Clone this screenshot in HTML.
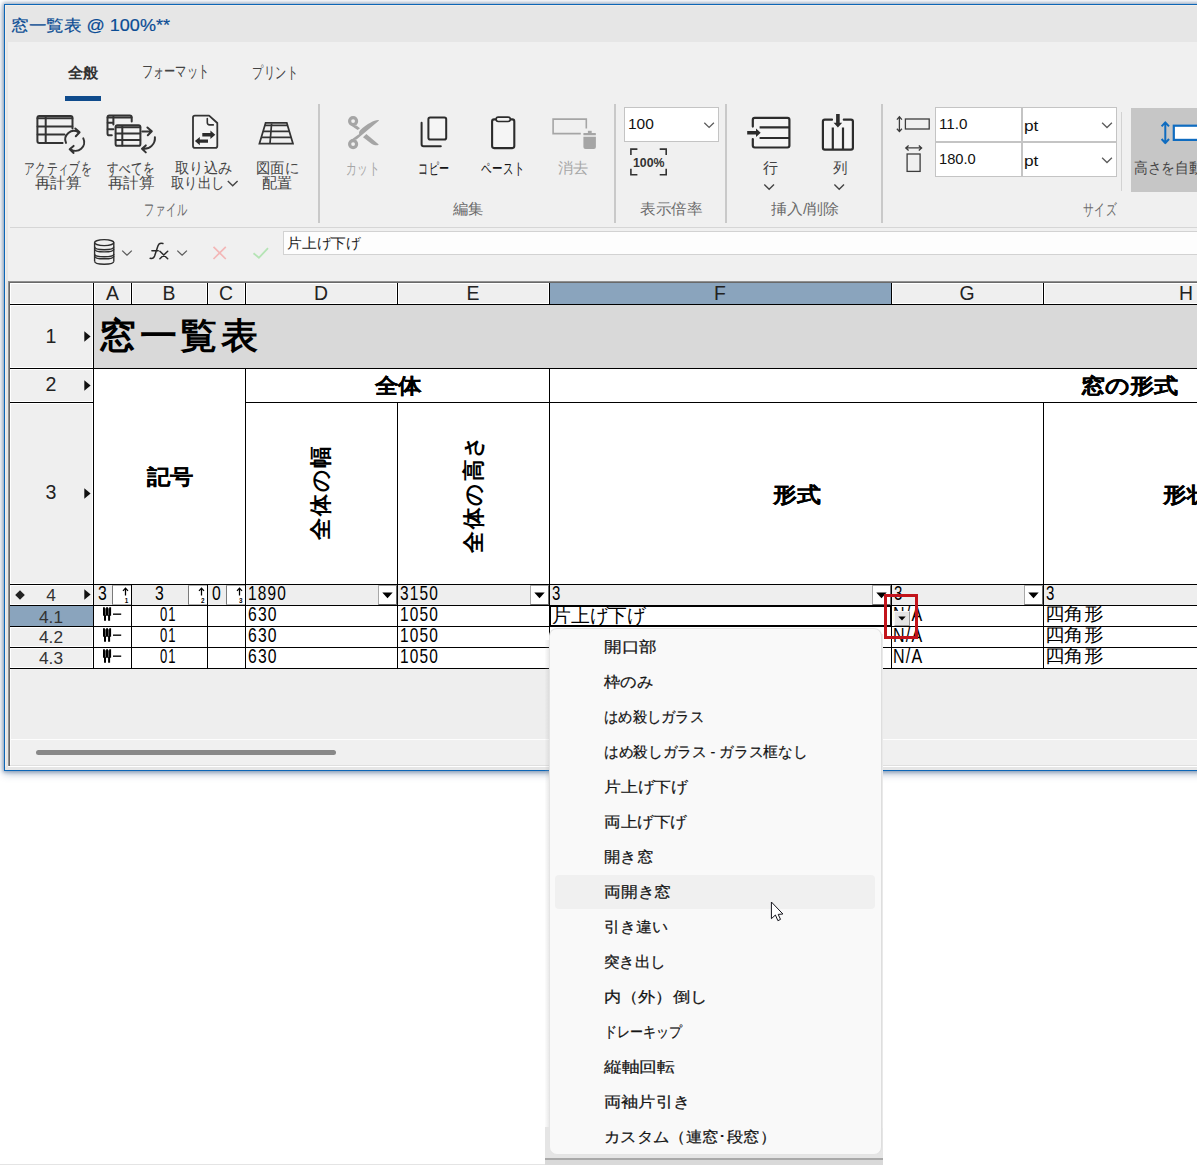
<!DOCTYPE html>
<html lang="ja"><head><meta charset="utf-8"><title>窓一覧表</title>
<style>
html,body{margin:0;padding:0}
body{width:1197px;height:1165px;overflow:hidden;background:#fff;position:relative;font-family:"Liberation Sans",sans-serif}
#root{position:absolute;left:0;top:0;width:1197px;height:1165px;overflow:hidden}
#root div,#root span.t,#root svg{position:absolute}
span.t{white-space:nowrap;transform-origin:0 50%}
svg{overflow:visible}
</style></head><body><div id="root">
<div style="left:4px;top:4px;width:1300px;height:767px;background:#e6e6e6;box-shadow:0 0 4px 1px rgba(55,90,135,.55),0 3px 8px rgba(55,90,135,.32)"></div>
<div style="left:8px;top:42px;width:1300px;height:725px;background:#f0f0f0;"></div>
<div style="left:4px;top:4px;width:1300px;height:1px;background:#0c66b7;"></div>
<div style="left:4px;top:4px;width:1px;height:767px;background:#0c66b7;"></div>
<div style="left:4px;top:770px;width:1300px;height:1px;background:#0c66b7;"></div>
<div style="left:5px;top:5px;width:1px;height:765px;background:#f3eee9;"></div>
<div style="left:5px;top:5px;width:1295px;height:1px;background:#f3eee9;"></div>
<span class="t" style="left:10.7px;top:16.80px;font-size:16.4px;line-height:16.4px;color:#0a4c94;transform:scale(1.1007,1);-webkit-text-stroke:.2px #0a4c94;">窓一覧表 @ 100%**</span>
<span class="t" style="left:67.8px;top:66.30px;font-size:14.6px;line-height:14.6px;color:#333;font-weight:bold;transform:scale(1.0200,1);">全般</span>
<span class="t" style="left:141.5px;top:64.00px;font-size:16px;line-height:16px;color:#444;transform:scale(0.6979,1.06);">フォーマット</span>
<span class="t" style="left:251.5px;top:64.85px;font-size:15.5px;line-height:15.5px;color:#444;transform:scale(0.7266,1.04);">プリント</span>
<div style="left:65px;top:96px;width:36px;height:5px;background:#0f4b8c;"></div>
<div style="left:318px;top:104px;width:2px;height:119px;background:#c9c9c9;"></div>
<div style="left:614px;top:104px;width:2px;height:119px;background:#c9c9c9;"></div>
<div style="left:725px;top:104px;width:2px;height:119px;background:#c9c9c9;"></div>
<div style="left:881px;top:104px;width:2px;height:119px;background:#c9c9c9;"></div>
<div style="left:1121px;top:112px;width:1px;height:79px;background:#d2d2d2;"></div>
<div style="left:10px;top:227px;width:1187px;height:1px;background:#d6d6d6;"></div>
<span class="t" style="left:24px;top:160.75px;font-size:14.5px;line-height:14.5px;color:#444;transform:scale(0.7556,1.13);">アクティブを</span>
<span class="t" style="left:35px;top:175.75px;font-size:14.5px;line-height:14.5px;color:#444;transform:scale(1.0333,1);">再計算</span>
<span class="t" style="left:107px;top:160.75px;font-size:14.5px;line-height:14.5px;color:#444;transform:scale(0.8083,1.13);">すべてを</span>
<span class="t" style="left:107.5px;top:175.75px;font-size:14.5px;line-height:14.5px;color:#444;transform:scale(1.0333,1);">再計算</span>
<span class="t" style="left:175px;top:160.75px;font-size:14.5px;line-height:14.5px;color:#444;transform:scale(0.9500,1);">取り込み</span>
<span class="t" style="left:171px;top:175.75px;font-size:14.5px;line-height:14.5px;color:#444;transform:scale(0.8917,1);">取り出し</span>
<span class="t" style="left:255.5px;top:160.75px;font-size:14.5px;line-height:14.5px;color:#444;transform:scale(0.9556,1);">図面に</span>
<span class="t" style="left:262px;top:175.75px;font-size:14.5px;line-height:14.5px;color:#444;">配置</span>
<span class="t" style="left:144px;top:201.75px;font-size:14.5px;line-height:14.5px;color:#6a6a6a;transform:scale(0.7250,1.13);">ファイル</span>
<span class="t" style="left:346px;top:160.75px;font-size:14.5px;line-height:14.5px;color:#a6a6a6;transform:scale(0.7556,1.13);">カット</span>
<span class="t" style="left:417.5px;top:160.75px;font-size:14.5px;line-height:14.5px;color:#151515;transform:scale(0.7111,1.13);">コピー</span>
<span class="t" style="left:481px;top:160.75px;font-size:14.5px;line-height:14.5px;color:#151515;transform:scale(0.7417,1.13);">ペースト</span>
<span class="t" style="left:558px;top:160.75px;font-size:14.5px;line-height:14.5px;color:#a6a6a6;transform:scale(1.0167,1);">消去</span>
<span class="t" style="left:452.5px;top:201.75px;font-size:14.5px;line-height:14.5px;color:#6a6a6a;transform:scale(1.0167,1);">編集</span>
<span class="t" style="left:639.5px;top:201.75px;font-size:14.5px;line-height:14.5px;color:#6a6a6a;transform:scale(1.0417,1);">表示倍率</span>
<span class="t" style="left:762.5px;top:160.75px;font-size:14.5px;line-height:14.5px;color:#444;">行</span>
<span class="t" style="left:832.5px;top:160.75px;font-size:14.5px;line-height:14.5px;color:#444;transform:scale(0.9667,1);">列</span>
<span class="t" style="left:771px;top:201.75px;font-size:14.5px;line-height:14.5px;color:#6a6a6a;transform:scale(1.0625,1);">挿入/削除</span>
<span class="t" style="left:1082.5px;top:201.75px;font-size:14.5px;line-height:14.5px;color:#6a6a6a;transform:scale(0.7556,1.13);">サイズ</span>
<div style="left:624px;top:107px;width:95px;height:35px;background:#fff;box-sizing:border-box;border:1px solid #c4c4c4"></div>
<span class="t" style="left:628px;top:116.25px;font-size:15.5px;line-height:15.5px;color:#111;">100</span>
<div style="left:935px;top:107px;width:87px;height:35px;background:#fff;box-sizing:border-box;border:1px solid #c4c4c4"></div>
<div style="left:1022px;top:107px;width:95px;height:35px;background:#fff;box-sizing:border-box;border:1px solid #c4c4c4"></div>
<div style="left:935px;top:142px;width:87px;height:35px;background:#fff;box-sizing:border-box;border:1px solid #c4c4c4"></div>
<div style="left:1022px;top:142px;width:95px;height:35px;background:#fff;box-sizing:border-box;border:1px solid #c4c4c4"></div>
<span class="t" style="left:939px;top:116.25px;font-size:15.5px;line-height:15.5px;color:#111;transform:scale(0.9828,1);">11.0</span>
<span class="t" style="left:939px;top:151.25px;font-size:15.5px;line-height:15.5px;color:#111;transform:scale(0.9487,1);">180.0</span>
<span class="t" style="left:1024px;top:118.25px;font-size:15.5px;line-height:15.5px;color:#111;transform:scale(1.1154,1);">pt</span>
<span class="t" style="left:1024px;top:153.25px;font-size:15.5px;line-height:15.5px;color:#111;transform:scale(1.1154,1);">pt</span>
<div style="left:1131px;top:108px;width:80px;height:84px;background:#c6c6c6;"></div>
<span class="t" style="left:1134px;top:161.25px;font-size:14.5px;line-height:14.5px;color:#444;transform:scale(0.9143,1);">高さを自動調整</span>
<div style="left:283px;top:231px;width:1000px;height:24px;background:#fdfdfd;box-sizing:border-box;border:1px solid #d2d2d2"></div>
<span class="t" style="left:287px;top:235.60px;font-size:14px;line-height:14px;color:#222;transform:scale(1.0571,1);">片上げ下げ</span>
<div style="left:8px;top:281px;width:1300px;height:1px;background:#909090;"></div>
<div style="left:8px;top:282px;width:1300px;height:1px;background:#696969;"></div>
<div style="left:8px;top:281px;width:1px;height:485px;background:#909090;"></div>
<div style="left:9px;top:282px;width:1px;height:484px;background:#696969;"></div>
<div style="left:10px;top:283px;width:1200px;height:456px;background:#eeeeee;"></div>
<div style="left:10px;top:739px;width:1187px;height:1px;background:#fdfdfd;"></div>
<div style="left:10px;top:740px;width:1200px;height:25px;background:#f0f0f0;"></div>
<div style="left:10px;top:283px;width:1px;height:483px;background:#fbfbfb;"></div>
<div style="left:10px;top:765px;width:1187px;height:1px;background:#dfdfdf;"></div>
<div style="left:8px;top:766px;width:1189px;height:1px;background:#ffffff;"></div>
<div style="left:5px;top:767px;width:1300px;height:3px;background:#e6e6e6;"></div>
<div style="left:36px;top:750px;width:300px;height:5px;background:#888;border-radius:3px"></div>
<div style="left:10px;top:283px;width:83px;height:21px;background:#efefef;box-shadow:inset 0 0 0 1px #fff"></div>
<div style="left:94px;top:283px;width:37px;height:21px;background:#efefef;box-shadow:inset 0 0 0 1px #fff"></div>
<div style="left:132px;top:283px;width:75px;height:21px;background:#efefef;box-shadow:inset 0 0 0 1px #fff"></div>
<div style="left:208px;top:283px;width:37px;height:21px;background:#efefef;box-shadow:inset 0 0 0 1px #fff"></div>
<div style="left:246px;top:283px;width:151px;height:21px;background:#efefef;box-shadow:inset 0 0 0 1px #fff"></div>
<div style="left:398px;top:283px;width:151px;height:21px;background:#efefef;box-shadow:inset 0 0 0 1px #fff"></div>
<div style="left:550px;top:283px;width:341px;height:21px;background:#8aa4bd;"></div>
<div style="left:892px;top:283px;width:151px;height:21px;background:#efefef;box-shadow:inset 0 0 0 1px #fff"></div>
<div style="left:1044px;top:283px;width:256px;height:21px;background:#efefef;box-shadow:inset 0 0 0 1px #fff"></div>
<div style="left:10px;top:305px;width:83px;height:63px;background:#efefef;box-shadow:inset 0 0 0 1px #fff"></div>
<div style="left:10px;top:369px;width:83px;height:33px;background:#efefef;box-shadow:inset 0 0 0 1px #fff"></div>
<div style="left:10px;top:403px;width:83px;height:181px;background:#efefef;box-shadow:inset 0 0 0 1px #fff"></div>
<div style="left:10px;top:585px;width:83px;height:20px;background:#efefef;box-shadow:inset 0 0 0 1px #fff"></div>
<div style="left:10px;top:606px;width:83px;height:20px;background:#8aa4bd;"></div>
<div style="left:10px;top:627px;width:83px;height:20px;background:#efefef;box-shadow:inset 0 0 0 1px #fff"></div>
<div style="left:10px;top:648px;width:83px;height:20px;background:#efefef;box-shadow:inset 0 0 0 1px #fff"></div>
<div style="left:94px;top:305px;width:1200px;height:63px;background:#d9d9d9;"></div>
<div style="left:94px;top:369px;width:1200px;height:215px;background:#fff;"></div>
<div style="left:94px;top:585px;width:1200px;height:20px;background:#eeeeee;"></div>
<div style="left:94px;top:606px;width:1200px;height:62px;background:#fff;"></div>
<div style="left:10px;top:304px;width:1187px;height:1px;background:#000;"></div>
<div style="left:10px;top:368px;width:1187px;height:1px;background:#000;"></div>
<div style="left:10px;top:402px;width:83px;height:1px;background:#000;"></div>
<div style="left:245px;top:402px;width:952px;height:1px;background:#000;"></div>
<div style="left:10px;top:584px;width:1187px;height:1px;background:#000;"></div>
<div style="left:10px;top:605px;width:1187px;height:1px;background:#000;"></div>
<div style="left:10px;top:626px;width:1187px;height:1px;background:#000;"></div>
<div style="left:10px;top:647px;width:1187px;height:1px;background:#000;"></div>
<div style="left:10px;top:668px;width:1187px;height:1px;background:#000;"></div>
<div style="left:93px;top:283px;width:1px;height:386px;background:#000;"></div>
<div style="left:131px;top:283px;width:1px;height:22px;background:#000;"></div>
<div style="left:131px;top:584px;width:1px;height:85px;background:#000;"></div>
<div style="left:207px;top:283px;width:1px;height:22px;background:#000;"></div>
<div style="left:207px;top:584px;width:1px;height:85px;background:#000;"></div>
<div style="left:245px;top:283px;width:1px;height:22px;background:#000;"></div>
<div style="left:245px;top:368px;width:1px;height:301px;background:#000;"></div>
<div style="left:397px;top:283px;width:1px;height:22px;background:#000;"></div>
<div style="left:397px;top:402px;width:1px;height:267px;background:#000;"></div>
<div style="left:549px;top:283px;width:1px;height:22px;background:#000;"></div>
<div style="left:549px;top:368px;width:1px;height:301px;background:#000;"></div>
<div style="left:891px;top:283px;width:1px;height:22px;background:#000;"></div>
<div style="left:891px;top:584px;width:1px;height:85px;background:#000;"></div>
<div style="left:1043px;top:283px;width:1px;height:22px;background:#000;"></div>
<div style="left:1043px;top:402px;width:1px;height:267px;background:#000;"></div>
<span class="t" style="left:104.4px;top:283.60px;font-size:19.4px;line-height:19.4px;color:#222;width:16px;text-align:center;">A</span>
<span class="t" style="left:161px;top:283.60px;font-size:19.4px;line-height:19.4px;color:#222;width:16px;text-align:center;">B</span>
<span class="t" style="left:218px;top:283.60px;font-size:19.4px;line-height:19.4px;color:#222;width:16px;text-align:center;">C</span>
<span class="t" style="left:313px;top:283.60px;font-size:19.4px;line-height:19.4px;color:#222;width:16px;text-align:center;">D</span>
<span class="t" style="left:465px;top:283.60px;font-size:19.4px;line-height:19.4px;color:#222;width:16px;text-align:center;">E</span>
<span class="t" style="left:712px;top:283.60px;font-size:19.4px;line-height:19.4px;color:#222;width:16px;text-align:center;">F</span>
<span class="t" style="left:959px;top:283.60px;font-size:19.4px;line-height:19.4px;color:#222;width:16px;text-align:center;">G</span>
<span class="t" style="left:1178px;top:283.60px;font-size:19.4px;line-height:19.4px;color:#222;width:16px;text-align:center;">H</span>
<span class="t" style="left:41px;top:326.60px;font-size:19.6px;line-height:19.6px;color:#222;width:20px;text-align:center;">1</span>
<span class="t" style="left:41px;top:375.40px;font-size:19.6px;line-height:19.6px;color:#222;width:20px;text-align:center;">2</span>
<span class="t" style="left:41px;top:483.40px;font-size:19.6px;line-height:19.6px;color:#222;width:20px;text-align:center;">3</span>
<span class="t" style="left:41px;top:586.85px;font-size:17.3px;line-height:17.3px;color:#333;width:20px;text-align:center;">4</span>
<span class="t" style="left:31px;top:608.85px;font-size:17.3px;line-height:17.3px;color:#333;width:40px;text-align:center;">4.1</span>
<span class="t" style="left:31px;top:629.35px;font-size:17.3px;line-height:17.3px;color:#333;width:40px;text-align:center;">4.2</span>
<span class="t" style="left:31px;top:650.35px;font-size:17.3px;line-height:17.3px;color:#333;width:40px;text-align:center;">4.3</span>
<svg style="left:84px;top:331.0px" width="7" height="11" viewBox="0 0 7 11"><path d="M0.3 0.2L6.6 5.5L0.3 10.8Z" fill="#111"/></svg>
<svg style="left:84px;top:380.0px" width="7" height="11" viewBox="0 0 7 11"><path d="M0.3 0.2L6.6 5.5L0.3 10.8Z" fill="#111"/></svg>
<svg style="left:84px;top:488.0px" width="7" height="11" viewBox="0 0 7 11"><path d="M0.3 0.2L6.6 5.5L0.3 10.8Z" fill="#111"/></svg>
<svg style="left:84px;top:589.2px" width="7" height="11" viewBox="0 0 7 11"><path d="M0.3 0.2L6.6 5.5L0.3 10.8Z" fill="#111"/></svg>
<svg style="left:14.5px;top:589.5px" width="10" height="10" viewBox="0 0 10 10"><path d="M5 0.2L9.8 5L5 9.8L0.2 5Z" fill="#222"/></svg>
<span class="t" style="left:99px;top:318.65px;font-size:35.5px;line-height:35.5px;color:#000;font-weight:bold;transform:scale(1.0285,1);letter-spacing:3.4px;">窓一覧表</span>
<span class="t" style="left:375px;top:376.05px;font-size:20.5px;line-height:20.5px;color:#000;font-weight:bold;transform:scale(1.1190,1);-webkit-text-stroke:.12px #000;">全体</span>
<span class="t" style="left:1080.5px;top:375.20px;font-size:21px;line-height:21px;color:#000;font-weight:bold;transform:scale(1.1471,1);-webkit-text-stroke:.12px #000;">窓の形式</span>
<span class="t" style="left:146.5px;top:465.70px;font-size:21px;line-height:21px;color:#000;font-weight:bold;transform:scale(1.1071,1);-webkit-text-stroke:.12px #000;">記号</span>
<span class="t" style="left:773.3px;top:484.10px;font-size:21px;line-height:21px;color:#000;font-weight:bold;transform:scale(1.1357,1);-webkit-text-stroke:.12px #000;">形式</span>
<span class="t" style="left:1163px;top:484.10px;font-size:21px;line-height:21px;color:#000;font-weight:bold;transform:scale(1.1310,1);-webkit-text-stroke:.12px #000;">形状</span>
<span class="t" style="left:322.4px;top:491.7px;font-size:21.5px;line-height:21.5px;color:#000;font-weight:bold;transform:translate(-50%,-50%) rotate(-90deg) scaleX(0.9959);transform-origin:50% 50%;letter-spacing:2px;">全体の幅</span>
<span class="t" style="left:475px;top:492.9px;font-size:21.5px;line-height:21.5px;color:#000;font-weight:bold;transform:translate(-50%,-50%) rotate(-90deg) scaleX(0.9820);transform-origin:50% 50%;letter-spacing:2px;">全体の高さ</span>
<span class="t" style="left:97.5px;top:584.90px;font-size:17px;line-height:17px;color:#000;transform:scale(0.9273,1.15);letter-spacing:1.3px;">3</span>
<span class="t" style="left:154.8px;top:584.90px;font-size:17px;line-height:17px;color:#000;transform:scale(0.9273,1.15);letter-spacing:1.3px;">3</span>
<span class="t" style="left:211.6px;top:584.90px;font-size:17px;line-height:17px;color:#000;transform:scale(0.9273,1.15);letter-spacing:1.3px;">0</span>
<span class="t" style="left:247.6px;top:585.10px;font-size:17px;line-height:17px;color:#000;transform:scale(0.9070,1.15);letter-spacing:1.3px;">1890</span>
<span class="t" style="left:399.6px;top:585.10px;font-size:17px;line-height:17px;color:#000;transform:scale(0.9070,1.15);letter-spacing:1.3px;">3150</span>
<span class="t" style="left:552px;top:585.10px;font-size:17px;line-height:17px;color:#000;transform:scale(0.8818,1.15);letter-spacing:1.3px;">3</span>
<span class="t" style="left:894px;top:585.10px;font-size:17px;line-height:17px;color:#000;transform:scale(0.8818,1.15);letter-spacing:1.3px;">3</span>
<span class="t" style="left:1046px;top:585.10px;font-size:17px;line-height:17px;color:#000;transform:scale(0.8818,1.15);letter-spacing:1.3px;">3</span>
<div style="left:378px;top:585px;width:19px;height:20px;background:#fff;box-sizing:border-box;border:1px solid #a8a8a8;border-bottom-color:#6e6e6e;border-right-color:#6e6e6e"></div>
<svg style="left:382px;top:592px" width="11" height="7" viewBox="0 0 11 7"><path d="M0.3 0.6H10.7L5.5 6.2Z" fill="#000"/></svg>
<div style="left:530px;top:585px;width:19px;height:20px;background:#fff;box-sizing:border-box;border:1px solid #a8a8a8;border-bottom-color:#6e6e6e;border-right-color:#6e6e6e"></div>
<svg style="left:534px;top:592px" width="11" height="7" viewBox="0 0 11 7"><path d="M0.3 0.6H10.7L5.5 6.2Z" fill="#000"/></svg>
<div style="left:872px;top:585px;width:19px;height:20px;background:#fff;box-sizing:border-box;border:1px solid #a8a8a8;border-bottom-color:#6e6e6e;border-right-color:#6e6e6e"></div>
<svg style="left:876px;top:592px" width="11" height="7" viewBox="0 0 11 7"><path d="M0.3 0.6H10.7L5.5 6.2Z" fill="#000"/></svg>
<div style="left:1024px;top:585px;width:19px;height:20px;background:#fff;box-sizing:border-box;border:1px solid #a8a8a8;border-bottom-color:#6e6e6e;border-right-color:#6e6e6e"></div>
<svg style="left:1028px;top:592px" width="11" height="7" viewBox="0 0 11 7"><path d="M0.3 0.6H10.7L5.5 6.2Z" fill="#000"/></svg>
<div style="left:111.5px;top:585px;width:19px;height:20px;background:#fff;box-sizing:border-box;border:1px solid #b4b4b4;border-left-color:#7a7a7a;border-right:none"></div>
<svg style="left:111.5px;top:585px" width="20" height="20" viewBox="111.5 585 20 20"><path d="M125.0 588.2V595.6M122.5 590.9L125.0 588.1L127.5 590.9" stroke="#000" stroke-width="1.25" fill="none"/></svg>
<span class="t" style="left:124.8px;top:598.05px;font-size:6.3px;line-height:6.3px;color:#000;font-weight:bold;">1</span>
<div style="left:187.6px;top:585px;width:19px;height:20px;background:#fff;box-sizing:border-box;border:1px solid #b4b4b4;border-left-color:#7a7a7a;border-right:none"></div>
<svg style="left:187.6px;top:585px" width="20" height="20" viewBox="187.6 585 20 20"><path d="M201.1 588.2V595.6M198.6 590.9L201.1 588.1L203.6 590.9" stroke="#000" stroke-width="1.25" fill="none"/></svg>
<span class="t" style="left:200.9px;top:598.05px;font-size:6.3px;line-height:6.3px;color:#000;font-weight:bold;">2</span>
<div style="left:225.7px;top:585px;width:19px;height:20px;background:#fff;box-sizing:border-box;border:1px solid #b4b4b4;border-left-color:#7a7a7a;border-right:none"></div>
<svg style="left:225.7px;top:585px" width="20" height="20" viewBox="225.7 585 20 20"><path d="M239.2 588.2V595.6M236.7 590.9L239.2 588.1L241.7 590.9" stroke="#000" stroke-width="1.25" fill="none"/></svg>
<span class="t" style="left:239.0px;top:598.05px;font-size:6.3px;line-height:6.3px;color:#000;font-weight:bold;">3</span>
<svg style="left:100px;top:606px" width="26" height="20" viewBox="100 606 26 20"><path d="M103 607.2H104.9V608.6H106.1V607.2H108V608.6H109.2V607.2H111.1V615.8000000000001H110.1V620.8000000000001H108.1V615.8000000000001H106V620.8000000000001H104V615.8000000000001H103Z" fill="#000"/><path d="M105.5 608.6V615.2M108.6 608.6V615.2" stroke="#8a8a8a" stroke-width=".7"/><rect x="113" y="613.5" width="8.2" height="1.35" fill="#000"/></svg>
<span class="t" style="left:159.9px;top:606.30px;font-size:17px;line-height:17px;color:#000;transform:scale(0.7682,1.15);letter-spacing:1.3px;">01</span>
<span class="t" style="left:247.8px;top:606.30px;font-size:17px;line-height:17px;color:#000;transform:scale(0.9234,1.15);letter-spacing:1.3px;">630</span>
<span class="t" style="left:400px;top:606.30px;font-size:17px;line-height:17px;color:#000;transform:scale(0.9070,1.15);letter-spacing:1.3px;">1050</span>
<span class="t" style="left:892.6px;top:606.30px;font-size:17px;line-height:17px;color:#000;transform:scale(0.9438,1.15);letter-spacing:1.3px;">N/A</span>
<span class="t" style="left:1045.3px;top:605.05px;font-size:18.3px;line-height:18.3px;color:#000;transform:scale(1.0833,1);">四角形</span>
<svg style="left:100px;top:627px" width="26" height="20" viewBox="100 627 26 20"><path d="M103 628.2H104.9V629.6H106.1V628.2H108V629.6H109.2V628.2H111.1V636.8000000000001H110.1V641.8000000000001H108.1V636.8000000000001H106V641.8000000000001H104V636.8000000000001H103Z" fill="#000"/><path d="M105.5 629.6V636.2M108.6 629.6V636.2" stroke="#8a8a8a" stroke-width=".7"/><rect x="113" y="634.5" width="8.2" height="1.35" fill="#000"/></svg>
<span class="t" style="left:159.9px;top:627.30px;font-size:17px;line-height:17px;color:#000;transform:scale(0.7682,1.15);letter-spacing:1.3px;">01</span>
<span class="t" style="left:247.8px;top:627.30px;font-size:17px;line-height:17px;color:#000;transform:scale(0.9234,1.15);letter-spacing:1.3px;">630</span>
<span class="t" style="left:400px;top:627.30px;font-size:17px;line-height:17px;color:#000;transform:scale(0.9070,1.15);letter-spacing:1.3px;">1050</span>
<span class="t" style="left:892.6px;top:627.30px;font-size:17px;line-height:17px;color:#000;transform:scale(0.9438,1.15);letter-spacing:1.3px;">N/A</span>
<span class="t" style="left:1045.3px;top:626.05px;font-size:18.3px;line-height:18.3px;color:#000;transform:scale(1.0833,1);">四角形</span>
<svg style="left:100px;top:648px" width="26" height="20" viewBox="100 648 26 20"><path d="M103 649.2H104.9V650.6H106.1V649.2H108V650.6H109.2V649.2H111.1V657.8000000000001H110.1V662.8000000000001H108.1V657.8000000000001H106V662.8000000000001H104V657.8000000000001H103Z" fill="#000"/><path d="M105.5 650.6V657.2M108.6 650.6V657.2" stroke="#8a8a8a" stroke-width=".7"/><rect x="113" y="655.5" width="8.2" height="1.35" fill="#000"/></svg>
<span class="t" style="left:159.9px;top:648.30px;font-size:17px;line-height:17px;color:#000;transform:scale(0.7682,1.15);letter-spacing:1.3px;">01</span>
<span class="t" style="left:247.8px;top:648.30px;font-size:17px;line-height:17px;color:#000;transform:scale(0.9234,1.15);letter-spacing:1.3px;">630</span>
<span class="t" style="left:400px;top:648.30px;font-size:17px;line-height:17px;color:#000;transform:scale(0.9070,1.15);letter-spacing:1.3px;">1050</span>
<span class="t" style="left:892.6px;top:648.30px;font-size:17px;line-height:17px;color:#000;transform:scale(0.9438,1.15);letter-spacing:1.3px;">N/A</span>
<span class="t" style="left:1045.3px;top:647.05px;font-size:18.3px;line-height:18.3px;color:#000;transform:scale(1.0833,1);">四角形</span>
<div style="left:550px;top:606px;width:341px;height:20px;background:#fff;box-sizing:border-box;border:1px solid #000"></div>
<span class="t" style="left:551.5px;top:605.50px;font-size:19px;line-height:19px;color:#000;transform:scale(0.9895,1);">片上げ下げ</span>
<div style="left:894px;top:611px;width:16px;height:15px;background:#e4e4e4;box-sizing:border-box;border:1px solid #9a9a9a;border-top-color:#f6f6f6;border-left-color:#f6f6f6"></div>
<svg style="left:898px;top:616px" width="8" height="5" viewBox="0 0 8 5"><path d="M0.3 0.4H7.7L4 4.6Z" fill="#000"/></svg>
<div style="left:883.6px;top:594.3px;width:34px;height:45px;background:transparent;box-sizing:border-box;border:3px solid #c2141b"></div>
<div style="left:545px;top:1127px;width:338px;height:38px;background:#e5e5e5;"></div>
<div style="left:545px;top:1158px;width:338px;height:2px;background:#a9a9a9;"></div>
<div style="left:545px;top:1160px;width:338px;height:5px;background:#d9d9d9;"></div>
<div style="left:545px;top:640px;width:4px;height:487px;background:linear-gradient(90deg,rgba(200,200,200,.05),rgba(160,160,160,.22));"></div>
<div style="left:881px;top:634px;width:2px;height:494px;background:#e9e9e9;"></div>
<div style="left:549px;top:628px;width:333px;height:527px;background:#f9f9f9;border-radius:8px;box-sizing:border-box;border:1px solid #e4e4e4;border-right-color:#dedede"></div>
<div style="left:555px;top:875px;width:320px;height:34px;background:#f0f0f0;border-radius:4px"></div>
<svg style="left:760px;top:895px" width="40" height="32" viewBox="760 895 40 32"><path d="M771.4 902V918.7L775.4 915L777.9 920.7L780.5 919.4L778.2 914.4L782.9 914Z" fill="#fff" stroke="#14141c" stroke-width="1" stroke-linejoin="round"/></svg>
<span class="t" style="left:604px;top:639.90px;font-size:14.8px;line-height:14.8px;color:#141414;transform:scale(1.1778,1);-webkit-text-stroke:.22px #141414;">開口部</span>
<span class="t" style="left:604px;top:674.90px;font-size:14.8px;line-height:14.8px;color:#141414;transform:scale(1.0889,1);-webkit-text-stroke:.22px #141414;">枠のみ</span>
<span class="t" style="left:604px;top:709.90px;font-size:14.8px;line-height:14.8px;color:#141414;transform:scale(0.9524,1);-webkit-text-stroke:.22px #141414;">はめ殺しガラス</span>
<span class="t" style="left:604px;top:744.90px;font-size:14.8px;line-height:14.8px;color:#141414;transform:scale(0.9760,1);-webkit-text-stroke:.22px #141414;">はめ殺しガラス - ガラス框なし</span>
<span class="t" style="left:604px;top:779.90px;font-size:14.8px;line-height:14.8px;color:#141414;transform:scale(1.1200,1);-webkit-text-stroke:.22px #141414;">片上げ下げ</span>
<span class="t" style="left:604px;top:814.90px;font-size:14.8px;line-height:14.8px;color:#141414;transform:scale(1.1067,1);-webkit-text-stroke:.22px #141414;">両上げ下げ</span>
<span class="t" style="left:604px;top:849.90px;font-size:14.8px;line-height:14.8px;color:#141414;transform:scale(1.0889,1);-webkit-text-stroke:.22px #141414;">開き窓</span>
<span class="t" style="left:604px;top:884.90px;font-size:14.8px;line-height:14.8px;color:#141414;transform:scale(1.1167,1);-webkit-text-stroke:.22px #141414;">両開き窓</span>
<span class="t" style="left:604px;top:919.90px;font-size:14.8px;line-height:14.8px;color:#141414;transform:scale(1.0667,1);-webkit-text-stroke:.22px #141414;">引き違い</span>
<span class="t" style="left:604px;top:954.90px;font-size:14.8px;line-height:14.8px;color:#141414;transform:scale(1.0333,1);-webkit-text-stroke:.22px #141414;">突き出し</span>
<span class="t" style="left:604px;top:989.90px;font-size:14.8px;line-height:14.8px;color:#141414;transform:scale(1.1444,1);-webkit-text-stroke:.22px #141414;">内（外）倒し</span>
<span class="t" style="left:604px;top:1024.90px;font-size:14.8px;line-height:14.8px;color:#141414;transform:scale(0.8667,1);-webkit-text-stroke:.22px #141414;">ドレーキップ</span>
<span class="t" style="left:604px;top:1059.90px;font-size:14.8px;line-height:14.8px;color:#141414;transform:scale(1.1833,1);-webkit-text-stroke:.22px #141414;">縦軸回転</span>
<span class="t" style="left:604px;top:1094.90px;font-size:14.8px;line-height:14.8px;color:#141414;transform:scale(1.1467,1);-webkit-text-stroke:.22px #141414;">両袖片引き</span>
<span class="t" style="left:604px;top:1129.90px;font-size:14.8px;line-height:14.8px;color:#141414;transform:scale(1.0886,1);-webkit-text-stroke:.22px #141414;">カスタム（連窓･段窓）</span>
<div style="left:0px;top:1164px;width:545px;height:1px;background:#e4e4e4;"></div>
<svg style="left:0;top:0" width="1197" height="300" viewBox="0 0 1197 300"><g stroke="#333" stroke-width="2" fill="none" stroke-linecap="round" stroke-linejoin="round">
<path d="M62.6 143H39.3Q37.4 143 37.4 141.1V118Q37.4 116.1 39.3 116.1H70.6Q72.5 116.1 72.5 118V128.4"/>
<path d="M37.6 118.2H72.3M45.7 117V143M37.6 126.5H72.3M37.6 134.5H64.4"/>
<path d="M66 142.9A8.6 8.6 0 0 1 78.6 132.3M75.3 128.5L79.6 132.2L75.8 136.2"/>
<path d="M83.3 138.4A8.6 8.6 0 0 1 70.6 149.2M73.6 145.9L69.7 149.3L73.6 152.9"/>
</g>
<g stroke="#333" stroke-width="2" fill="none" stroke-linecap="round" stroke-linejoin="round">
<path d="M111.8 135.3H109.4Q107.5 135.3 107.5 133.4V117.4Q107.5 115.5 109.4 115.5H129.8Q131.7 115.5 131.7 117.4V121.4"/>
<path d="M107.7 117.6H131.5M113.4 116.5V124.4M107.7 122.7H113.4M107.7 129.2H113.4"/>
<rect x="115.6" y="125.2" width="24.8" height="20.6" rx="1.9" fill="#f3f3f3"/>
<path d="M115.8 127.3H140.2M122.3 126.2V145.6M115.8 133.6H140.2M115.8 139.9H140.2"/>
<path d="M142.3 131.6H151M147.4 127.5L151.8 131.3L147.8 135.2"/>
<path d="M154.9 137.2A10.6 10.6 0 0 1 142.9 148.7M145.8 145.4L142 148.7L145.8 152.4"/>
</g>
<g stroke="#333" stroke-width="1.8" fill="none" stroke-linejoin="round" stroke-linecap="round">
<path d="M194.9 115.6H209.1L217.3 123V145.9Q217.3 147.8 215.4 147.8H194.9Q193 147.8 193 145.9V117.5Q193 115.6 194.9 115.6Z" fill="#f4f4f4"/>
<path d="M207.3 118.6V122.6Q207.3 124.9 209.6 124.9H213.3" stroke-width="1.6"/>
</g>
<path d="M202.3 133.1H210.4V130.6L215.3 134.8L210.4 139V136.5H202.3Z" fill="#2c2c2c"/>
<path d="M208 139.4H199.8V136.9L194.9 141.1L199.8 145.3V142.8H208Z" fill="#2c2c2c"/>
<g stroke="#333" stroke-width="1.7" fill="none" stroke-linejoin="miter">
<path d="M265.6 122.9H286.8L293 143.7H259.4Z"/>
<path d="M264.9 125.3H287.5M263.1 131.3H289.3M261.3 137.4H291.1M271.6 123.5L270 143.4"/>
</g>
<g fill="none" stroke="#a5a5a5" stroke-width="3.2">
<circle cx="353.1" cy="121.1" r="3.5"/><circle cx="353.1" cy="144.1" r="3.5"/>
</g>
<g fill="#a5a5a5">
<path d="M350.6 125.2L356.4 125.4L360 128.3L357.6 130.1Z"/>
<path d="M378.8 120.1C374.5 119.7 368 123.5 360.1 130.2L359.1 131.9V134.3L358.1 134.8L350.6 140.2L356.5 139.5L378.8 120.8Z"/>
<path d="M363 137.2L366.3 133.9L378.8 144.4C377 145.9 374.5 145.3 371.5 143.7Z"/>
</g>
<g stroke="#2c2c2c" stroke-width="2" fill="none" stroke-linecap="round" stroke-linejoin="round">
<rect x="428.4" y="117.5" width="17.8" height="22" rx="1.8" fill="#f5f5f5"/>
<path d="M421.6 122.8V144.3Q421.6 146.2 423.5 146.2H440.8"/>
</g>
<g stroke="#2c2c2c" fill="none">
<rect x="492.1" y="119.4" width="22.2" height="28.7" rx="2" stroke-width="2.1" fill="#f5f5f5"/>
<rect x="496.1" y="117.1" width="14.2" height="4.4" rx="2.2" stroke-width="1.6" fill="#f2f2f2"/>
</g>
<path d="M580.8 133.6H553.1V119.1H586.3V128.6" stroke="#a5a5a5" stroke-width="1.6" fill="none"/>
<g fill="#a5a5a5"><rect x="587.9" y="130.8" width="3.8" height="3"/><rect x="583.4" y="132.9" width="12.5" height="2.4" rx=".6"/>
<path d="M583.4 136.8H595.9V147Q595.9 149.1 593.8 149.1H585.5Q583.4 149.1 583.4 147Z"/></g>
<path d="M704.3 122.8L709.0999999999999 127.4L713.9 122.8" stroke="#5c5c5c" stroke-width="1.3" fill="none"/>
<path d="M630.9 155V149.1H637.4M659.7 149.1H666.2V155M630.9 168.7V174.8H637.4M659.7 174.8H666.2V168.7" stroke="#333" stroke-width="1.6" fill="none"/>
<g stroke="#2c2c2c" stroke-width="2.2" fill="none" stroke-linecap="round" stroke-linejoin="round">
<path d="M752.8 126.6V119.7Q752.8 117.8 754.7 117.8H787.5Q789.4 117.8 789.4 119.7V145.6Q789.4 147.5 787.5 147.5H754.7Q752.8 147.5 752.8 145.6V139" fill="#f4f4f4"/>
<path d="M759.6 127.4H789M759.6 138H789" stroke-linecap="butt"/>
</g>
<path d="M747.2 131.1H756V128.6L760.7 132.8L756 137V134.6H747.2Z" fill="#2c2c2c"/>
<g stroke="#2c2c2c" stroke-width="2.2" fill="none" stroke-linecap="round" stroke-linejoin="round">
<path d="M832 119.7H824.8Q822.9 119.7 822.9 121.6V147.8Q822.9 149.7 824.8 149.7H851Q852.9 149.7 852.9 147.8V121.6Q852.9 119.7 851 119.7H843.8" fill="#f4f4f4"/>
<path d="M832.8 127.4V149.4M843 127.4V149.4" stroke-linecap="butt"/>
</g>
<path d="M836.1 114H839.7V122.8H842.2L837.9 127.6L833.6 122.8H836.1Z" fill="#2c2c2c"/>
<path d="M764.3 184.6L769.15 189.3L774 184.6" stroke="#444" stroke-width="1.4" fill="none"/>
<path d="M834.4 184.6L839.2 189.3L844 184.6" stroke="#444" stroke-width="1.4" fill="none"/>
<path d="M227.8 181L232.7 185.8L237.6 181" stroke="#444" stroke-width="1.4" fill="none"/>
<g stroke="#3c3c3c" stroke-width="1.3" fill="none">
<path d="M899.4 117V131.4M896.9 119.6L899.4 116.8L901.9 119.6M896.9 128.8L899.4 131.6L901.9 128.8"/>
<rect x="905.4" y="119" width="23.8" height="10"/>
<path d="M906 147.9H921.4M908.6 145.4L905.8 147.9L908.6 150.4M918.8 145.4L921.6 147.9L918.8 150.4"/>
<rect x="907.1" y="154" width="13" height="17.4"/>
</g>
<path d="M1102.1 122.8L1107.0 127.5L1111.9 122.8" stroke="#5c5c5c" stroke-width="1.3" fill="none"/>
<path d="M1102.1 157.8L1107.0 162.5L1111.9 157.8" stroke="#5c5c5c" stroke-width="1.3" fill="none"/>
<g stroke="#0f6cc0" stroke-width="2" fill="none">
<path d="M1165.3 122.6V142.8M1161.6 126.4L1165.3 122.3L1169 126.4M1161.6 139L1165.3 143.1L1169 139" stroke-linejoin="round"/>
<rect x="1173.8" y="125.7" width="40" height="14.2" fill="#fff" stroke-width="2.2"/>
</g>
<g stroke="#2e2e2e" stroke-width="1.4" fill="none">
<ellipse cx="104.2" cy="242.6" rx="9.6" ry="3"/>
<path d="M94.6 242.6V261.3M113.8 242.6V261.3"/>
<path d="M94.6 246.8C94.6 250.7 113.8 250.7 113.8 246.8M94.6 248.9C94.6 252.8 113.8 252.8 113.8 248.9M94.6 253.9C94.6 257.8 113.8 257.8 113.8 253.9M94.6 255.9C94.6 259.8 113.8 259.8 113.8 255.9M94.6 261.3C94.6 265.2 113.8 265.2 113.8 261.3"/>
</g>
<path d="M122.2 250.6L127.0 255.2L131.8 250.6" stroke="#5c5c5c" stroke-width="1.3" fill="none"/>
<path d="M177.3 250.6L182.10000000000002 255.2L186.9 250.6" stroke="#5c5c5c" stroke-width="1.3" fill="none"/>
<g stroke="#2a2a2a" stroke-width="1.5" fill="none" stroke-linecap="round">
<path d="M162.9 243.5C160.2 242.6 158.7 243.6 157.9 246L154.6 256C153.8 258.2 152.4 258.8 150.2 258.3M151.9 250.8H158.2"/>
<path d="M159.9 251.3L167.7 258.7M167.7 251.3L159.9 258.7"/>
</g>
<path d="M213.5 246.8L225.8 259M225.8 246.8L213.5 259" stroke="#f3b7b7" stroke-width="1.7" fill="none"/>
<path d="M253.5 253.2L258.9 257.8L268 248.2" stroke="#b5e4b5" stroke-width="1.8" fill="none"/></svg>
<span class="t" style="left:633px;top:156.30px;font-size:13.6px;line-height:13.6px;color:#333;font-weight:bold;transform:scale(0.9086,1);">100%</span>
</div></body></html>
